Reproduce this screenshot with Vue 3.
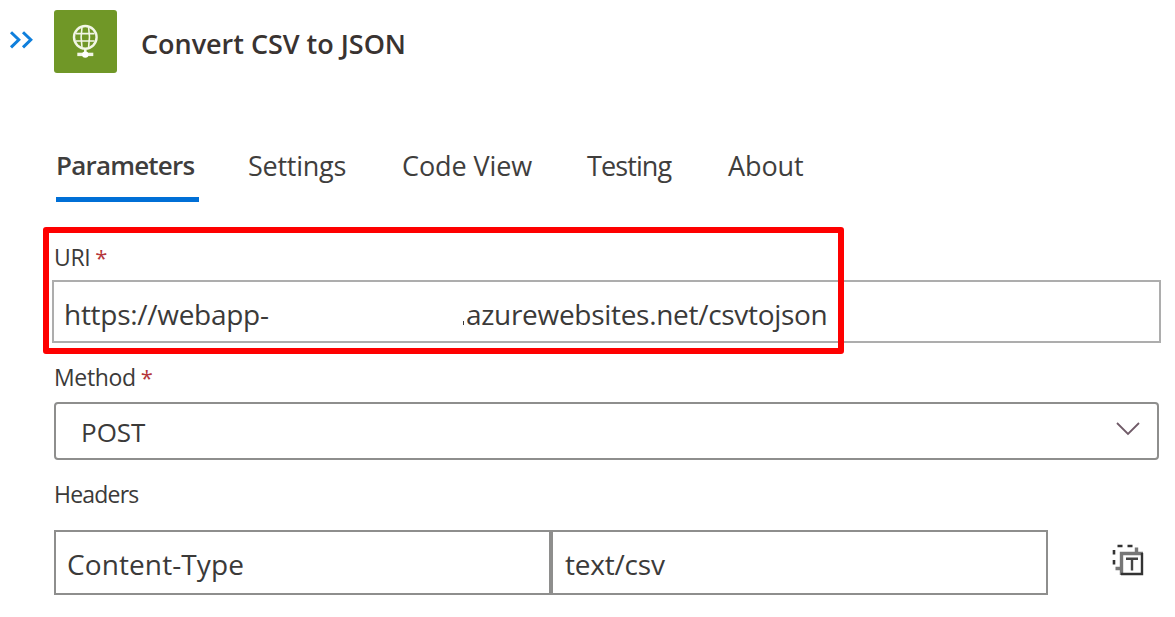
<script setup>
import { ref } from 'vue'

const tabs = [
  { label: 'Parameters', cls: 'parameters' },
  { label: 'Settings', cls: 'settings' },
  { label: 'Code View', cls: 'code' },
  { label: 'Testing', cls: 'testing' },
  { label: 'About', cls: 'about' },
]
const active = ref('Parameters')
</script>

<template>
  <main class="panel">
    <header class="head">
      <svg class="collapse" width="26" height="20" viewBox="0 0 26 20" fill="none" stroke="#0f7fdc" stroke-width="3">
        <path d="M2 2.2 9.8 9.8 2 17.4M14 2.2 21.8 9.8 14 17.4" />
      </svg>
      <span class="logo">
        <svg width="63" height="63" viewBox="0 0 63 63" fill="none" stroke="#f2f6e6">
          <circle cx="31.3" cy="27.3" r="11.3" stroke-width="2.4" />
          <path d="M28 17.2Q26.2 27.3 28 37.4M34.6 17.2Q36.4 27.3 34.6 37.4M22 23.6H40.6M22 31H40.6" stroke-width="1.6" />
          <path d="M31.3 38.5V44" stroke-width="2.6" />
          <path d="M23.3 44.4H39.3" stroke-width="3.4" />
          <circle cx="31.3" cy="44.6" r="3.2" fill="#fff" stroke="none" />
        </svg>
      </span>
      <h1>Convert CSV to JSON</h1>
    </header>

    <nav class="tabs">
      <button
        v-for="t in tabs"
        :key="t.label"
        class="tab"
        :class="[t.cls, { active: active === t.label }]"
        @click="active = t.label"
      >{{ t.label }}</button>
    </nav>

    <section class="uri">
      <div class="label">URI<span class="req">*</span></div>
      <div class="field uri-field">
        <span class="host">https://webapp-</span>
        <span class="domain"><i class="dot"></i>azurewebsites.net/csvtojson</span>
      </div>
      <div class="highlight"></div>
    </section>

    <section class="method">
      <div class="label">Method<span class="req">*</span></div>
      <div class="field select">
        <span>POST</span>
        <svg width="26" height="16" viewBox="0 0 26 16" fill="none" stroke="#705b68" stroke-width="1.8">
          <path d="M2 2 13 13 24 2" />
        </svg>
      </div>
    </section>

    <section class="headers">
      <div class="label headers-label">Headers</div>
      <div class="row">
        <div class="field key">Content-Type</div>
        <div class="field value">text/csv</div>
        <svg class="mode" width="32" height="32" viewBox="0 0 32 32" fill="none">
          <path d="M5.5 2H10.5M15.5 2H20.5M2 6V10.5M2 16V20.5" stroke="#333" stroke-width="2.6" />
          <path d="M24.5 3.5V8.5M3.5 24.5H9" stroke="#777" stroke-width="3.4" />
          <path d="M9.5 31V9.5H31" stroke="#777" stroke-width="3.4" />
          <path d="M30 9V30H9" stroke="#333" stroke-width="2.4" />
          <path d="M14 14.8H26M20 14.8V26.5" stroke="#444" stroke-width="2.4" />
        </svg>
      </div>
    </section>
  </main>
</template>

<style>
body {
  background: #fff;
}
</style>

<style scoped>
.panel {
  box-sizing: border-box;
  width: 1175px;
  height: 617px;
  overflow: hidden;
  background: #fff;
  color: #3b3a39;
  font-family: "Open Sans", "Noto Sans", sans-serif;
}
.head {
  display: flex;
  align-items: flex-start;
  height: 145px;
  padding: 10px 0 0 9px;
  box-sizing: border-box;
}
.collapse {
  margin: 20px 19px 0 0;
}
.logo {
  width: 63px;
  height: 63px;
  border-radius: 3px;
  background: #709727;
}
.logo svg {
  display: block;
}
h1 {
  margin: 14px 0 0 24px;
  font-size: 27px;
  line-height: 40px;
  font-weight: 600;
  letter-spacing: -0.02px;
  color: #393331;
}
.tabs {
  display: flex;
  height: 57px;
  padding-left: 56px;
}
.tab {
  box-sizing: border-box;
  height: 57px;
  padding: 0 0 15px;
  border: 0;
  background: none;
  color: #3f3e3d;
  font: 400 27px/40px "Open Sans", "Noto Sans", sans-serif;
  text-align: left;
  white-space: nowrap;
}
.parameters {
  width: 143px;
  letter-spacing: -0.8px;
}
.tab.active {
  padding-bottom: 12px;
  border-bottom: 5px solid #006fd6;
  font-size: 26px;
  font-weight: 600;
}
.settings {
  margin-left: 49px;
  width: 103px;
  letter-spacing: -0.25px;
}
.code {
  margin-left: 51px;
  width: 134px;
  letter-spacing: -0.1px;
}
.testing {
  margin-left: 51px;
  width: 90px;
  letter-spacing: -0.9px;
}
.about {
  margin-left: 51px;
  letter-spacing: -0.1px;
}
.label {
  height: 24px;
  padding-left: 54px;
  font-size: 23px;
  line-height: 24px;
  letter-spacing: -0.35px;
  white-space: nowrap;
}
.req {
  margin-left: 5px;
  color: #b5373c;
  font-size: 22px;
}
.field {
  box-sizing: border-box;
  display: flex;
  align-items: center;
  border: 2px solid #8e8e8d;
  background: #fff;
  font-size: 28px;
  line-height: 40px;
  white-space: nowrap;
}
.uri {
  position: relative;
  height: 163px;
  padding-top: 43px;
  box-sizing: border-box;
}
.uri-field {
  margin: 11px 0 0 52px;
  width: 1109px;
  height: 63px;
  padding: 5px 0 0 10px;
  border-color: #adadad;
}
.host {
  width: 399px;
  letter-spacing: -0.28px;
}
.domain {
  position: relative;
  margin-left: 3px;
  letter-spacing: -0.3px;
}
.dot {
  position: absolute;
  left: -3px;
  bottom: 9px;
  width: 1px;
  height: 4px;
  background: #3b3a39;
}
.highlight {
  position: absolute;
  left: 43px;
  top: 25px;
  width: 801px;
  height: 127px;
  box-sizing: border-box;
  border: 6px solid #fe0000;
  border-radius: 3px;
}
.select {
  justify-content: space-between;
  margin: 13px 0 0 54px;
  width: 1105px;
  height: 58px;
  padding: 1px 16px 0 25px;
  border-radius: 4px;
  font-size: 26px;
}
.select svg {
  margin-top: -6px;
}
.headers-label {
  margin-top: 22px;
  letter-spacing: -0.8px;
}
.row {
  display: flex;
  margin: 24px 0 0 54px;
}
.key,
.value {
  height: 65px;
  padding: 2px 0 0 11px;
}
.key {
  width: 497px;
  letter-spacing: 0.1px;
}
.value {
  width: 497px;
  padding-left: 12px;
  letter-spacing: -0.2px;
}
.mode {
  margin: 14px 0 0 64px;
}
</style>
